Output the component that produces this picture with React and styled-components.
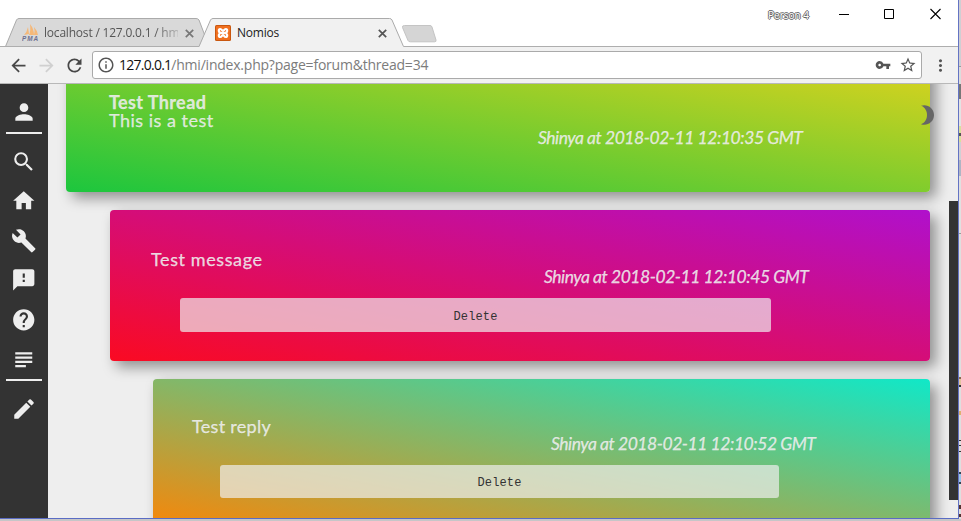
import React from "react";
import styled, { createGlobalStyle } from "styled-components";
import {
  MdPerson, MdSearch, MdHome, MdBuild, MdFeedback, MdHelp, MdSubject, MdEdit,
  MdArrowBack, MdArrowForward, MdRefresh, MdVpnKey, MdStarBorder, MdMoreVert,
  MdInfoOutline,
} from "react-icons/md";

const GlobalStyle = createGlobalStyle`
  * { box-sizing: border-box; }
  body { margin: 0; background: #d2d2d2; overflow: hidden; }
  svg { display: block; flex: none; }
`;

const Desktop = styled.div`
  display: flex;
  width: 961px;
  height: 521px;
  overflow: hidden;
  background: #c6c6c8;
`;

const Window = styled.div`
  display: flex;
  flex-direction: column;
  width: 959px;
  height: 519px;
  border-right: 1px solid #6474c4;
  border-bottom: 1px solid #5a6cc4;
  background: #fff;
  font-family: "Open Sans", sans-serif;
`;

const Edge = styled.div`
  display: flex;
  flex-direction: column;
  width: 2px;
  height: 519px;
`;

const EdgePiece = styled.div`
  height: ${(p) => p.$h}px;
  flex: none;
  background: ${(p) => p.$c};
`;

const TitleBar = styled.header`
  position: relative;
  height: 47px;
  flex: none;
  background: #fff;
`;

const TabShapes = styled.svg`
  position: absolute;
  left: 0;
  top: 0;
`;

const TabRow = styled.div`
  position: absolute;
  left: 22px;
  top: 22px;
  display: flex;
  height: 22px;
  align-items: center;
`;

const Tab = styled.div`
  display: flex;
  align-items: center;
  width: ${(p) => p.$w}px;
`;

const TabTitle = styled.span`
  width: ${(p) => p.$w}px;
  margin-left: ${(p) => p.$gap}px;
  overflow: hidden;
  white-space: nowrap;
  font-size: 12px;
  line-height: 20px;
  letter-spacing: ${(p) => p.$ls}px;
  color: ${(p) => p.$c};
  ${(p) => p.$fade && "-webkit-mask-image: linear-gradient(to right, #000 82%, rgba(0,0,0,.25)); mask-image: linear-gradient(to right, #000 82%, rgba(0,0,0,.25));"}
`;

const Controls = styled.div`
  position: absolute;
  right: 17px;
  top: 6px;
  display: flex;
  align-items: center;
  height: 16px;
`;

const Profile = styled.span`
  position: relative;
  top: 1px;
  margin-right: 30px;
  font-size: 10px;
  line-height: 16px;
  letter-spacing: 0;
  color: #fff;
  text-shadow: 1px 0 #666, -1px 0 #666, 0 1px #666, 0 -1px #666;
`;

const ControlIcon = styled.svg`
  margin-left: ${(p) => p.$gap || 0}px;
`;

const Toolbar = styled.div`
  display: flex;
  align-items: center;
  height: 37px;
  flex: none;
  padding: 0 8px;
  background: #f1f1f1;
  border-bottom: 1px solid #b8b8b8;
  color: #555;
`;

const ToolButton = styled.span`
  display: flex;
  justify-content: center;
  width: 28px;
  padding-right: 8px;
  color: ${(p) => (p.$off ? "#d0d0d0" : "#484848")};
`;

const AddressBar = styled.div`
  display: flex;
  align-items: center;
  width: 830px;
  height: 28px;
  padding: 0 4px;
  background: #fff;
  border: 1px solid #aaa;
  border-radius: 3px;
`;

const Url = styled.span`
  flex: 1;
  margin-left: 4px;
  font-size: 14px;
  line-height: 22px;
  letter-spacing: ${(p) => p.$ls}px;
  color: #7c7c7c;
`;

const Host = styled.span`
  color: #111;
  letter-spacing: ${(p) => p.$ls}px;
`;

const Body = styled.div`
  position: relative;
  display: flex;
  flex: 1;
  min-height: 0;
  background: #eee;
`;

const Sidebar = styled.nav`
  display: flex;
  flex-direction: column;
  align-items: center;
  width: 48px;
  padding-top: 8px;
  background: #333;
  color: #eee;
`;

const NavItem = styled.span`
  display: flex;
  align-items: center;
  justify-content: center;
  height: 39.6px;
`;

const Divider = styled.span`
  width: 36px;
  height: 2px;
  background: #eee;
  margin-bottom: ${(p) => p.$after}px;
`;

const ForumArea = styled.div`
  width: 910px;
  height: 434px;
  overflow: hidden;
`;

const Thread = styled.main`
  display: flex;
  flex-direction: column;
  align-items: flex-end;
  gap: 18px;
  width: 882px;
`;

const Card = styled.article`
  flex: none;
  width: ${(p) => p.$w}px;
  height: ${(p) => p.$h}px;
  margin-top: ${(p) => p.$mt || 0}px;
  padding: ${(p) => p.$pt || 40}px 0 0 ${(p) => p.$pad}px;
  border-radius: 4px;
  background: linear-gradient(to top right, ${(p) => p.$from}, ${(p) => p.$to});
  box-shadow: 6px 6px 14px rgba(0, 0, 0, 0.4);
  color: rgba(238, 238, 238, 0.9);
  font-family: "Lato", sans-serif;
  font-size: 18px;
  line-height: 18px;
  white-space: nowrap;
  -webkit-text-stroke: 0.25px currentColor;
`;

const Line = styled.div`
  height: 18px;
  letter-spacing: ${(p) => p.$ls}px;
  font-weight: ${(p) => (p.$bold ? 700 : 400)};
`;

const Meta = styled.div`
  height: 18px;
  margin-left: ${(p) => p.$ml}px;
  font-size: 17.5px;
  font-style: italic;
  letter-spacing: ${(p) => p.$ls}px;
`;

const DeleteButton = styled.button`
  display: block;
  width: ${(p) => p.$w}px;
  height: ${(p) => p.$h}px;
  margin: 12px 0 0 ${(p) => p.$ml}px;
  padding: 3px 0 0;
  border: 0;
  border-radius: 3px;
  background: rgba(238, 238, 238, 0.7);
  color: #333;
  font-family: "Liberation Mono", monospace;
  font-size: 12px;
  letter-spacing: 0.13px;
  -webkit-text-stroke: 0;
`;

const Scrollbar = styled.div`
  position: absolute;
  right: 0;
  top: 117px;
  width: 9px;
  height: 299px;
  background: #333;
`;

const Moon = styled.svg`
  position: absolute;
  left: 921px;
  top: 21px;
`;

const PmaLogo = () => (
  <svg width="18" height="18" viewBox="0 0 18 18">
    <path d="M2 11Q5 8 6 3L7 10Z M7 11Q9 7 8 0Q12 5 12 11Z M12 11Q13 6 12 3Q15 6 16 11Z" fill="#f5b878" />
    <text x="0" y="17" fontFamily="Liberation Sans" fontSize="6.4" fontWeight="700" fontStyle="italic" fill="#6d6f8e" textLength="16">PMA</text>
  </svg>
);

const XamppLogo = () => (
  <svg width="16" height="16" viewBox="0 0 16 16">
    <rect width="16" height="16" rx="1.5" fill="#c9570f" />
    <rect x="1" y="1" width="14" height="14" rx="1" fill="#f07020" />
    <path d="M6.2 8H9.8M6.2 8C3.5 8 3 4 5.2 4C7 4 6.8 6 8 6C9.2 6 9 4 10.8 4C13 4 12.5 8 9.8 8M6.2 8C3.5 8 3 12 5.2 12C7 12 6.8 10 8 10C9.2 10 9 12 10.8 12C13 12 12.5 8 9.8 8" fill="none" stroke="#fff" strokeWidth="2.2" />
  </svg>
);

const Cross = ({ color }) => (
  <svg width="9" height="9" viewBox="0 0 9 9">
    <path d="M.8 .8L8.2 8.2M8.2 .8L.8 8.2" stroke={color} strokeWidth="1.7" />
  </svg>
);

const NAV = [MdSearch, MdHome, MdBuild, MdFeedback, MdHelp, MdSubject];

const EDGE = [
  [66, "#cfcfd3"], [1, "#999"], [17, "#dcdcdc"], [15, "#777"], [27, "#e3e3e3"],
  [7, "#d9df9b"], [3, "#555"], [6, "#d9df9b"], [18, "#d0d0d4"], [16, "#aeb5c4"],
  [57, "#e0e0e0"], [1, "#999"], [143, "#dedede"], [2, "#8a6a50"], [6, "#e2c49c"],
  [2, "#333"], [24, "#dedede"], [4, "#dfb070"], [25, "#dedede"], [1, "#333"],
  [4, "#dedede"], [1, "#333"], [5, "#dedede"], [1, "#333"], [20, "#dedede"],
  [2, "#345"], [8, "#9cc4e8"], [2, "#345"], [21, "#dedede"], [4, "#533"],
  [5, "#dedede"], [3, "#533"], [2, "#dedede"],
];

export default function App() {
  return (
    <Desktop>
      <GlobalStyle />
      <Window>
        <TitleBar>
          <TabShapes width="958" height="47" viewBox="0 0 958 47">
            <path d="M5.5 46.5L16.5 20Q17.3 18.5 19 18.5H196Q198 18.5 199 20L209 46.5Z" fill="#d9d9d9" stroke="#aaa" />
            <rect y="46" width="958" height="1" fill="#aeaeae" />
            <path d="M199 47L210.5 20Q211.3 18.5 213 18.5H389.5Q391.3 18.5 392 20L403.5 46.5L404 47Z" fill="#f1f1f1" />
            <path d="M199 46.5L210.5 20Q211.3 18.5 213 18.5H389.5Q391.3 18.5 392 20L403.5 46.5" fill="none" stroke="#aaa" />
            <path d="M404.5 25.5H430Q431.5 25.5 432 27L436 40Q436.5 41.8 434.5 41.8H410.5Q408.5 41.8 408 40.5L402.5 27.5Q402 25.5 404.5 25.5Z" fill="#d5d5d5" stroke="#c4c4c4" />
          </TabShapes>
          <TabRow>
            <Tab $w={193}>
              <PmaLogo />
              <TabTitle $w={134} $gap={4} $ls={-0.2} $c="#555" $fade>localhost / 127.0.0.1 / hm</TabTitle>
              <ControlIcon as="span" $gap={7}><Cross color="#777" /></ControlIcon>
            </Tab>
            <Tab $w={175}>
              <XamppLogo />
              <TabTitle $w={134} $gap={6} $ls={-0.2} $c="#222">Nomios</TabTitle>
              <ControlIcon as="span" $gap={7}><Cross color="#555" /></ControlIcon>
            </Tab>
          </TabRow>
          <Controls>
            <Profile>Person 4</Profile>
            <ControlIcon width="10" height="12" viewBox="0 0 10 12"><path d="M0 6.5H10" stroke="#000" /></ControlIcon>
            <ControlIcon $gap={35} width="11" height="12" viewBox="0 0 11 12"><path d="M.5 1.5H9.5V10.5H.5Z" fill="none" stroke="#000" /></ControlIcon>
            <ControlIcon $gap={35} width="11" height="12" viewBox="0 0 11 12"><path d="M.5 1L10.5 11M10.5 1L.5 11" stroke="#000" strokeWidth="1.1" /></ControlIcon>
          </Controls>
        </TitleBar>
        <Toolbar>
          <ToolButton><MdArrowBack size={21} /></ToolButton>
          <ToolButton $off><MdArrowForward size={21} /></ToolButton>
          <ToolButton><MdRefresh size={21} /></ToolButton>
          <AddressBar>
            <MdInfoOutline size={18} />
            <Url $ls={-0.22}><Host $ls={-0.75}>127.0.0.1</Host>/hmi/index.php?page=forum&amp;thread=34</Url>
            <MdVpnKey size={16} />
            <ControlIcon as="span" $gap={8}><MdStarBorder size={18} /></ControlIcon>
          </AddressBar>
          <ControlIcon as="span" $gap={9}><MdMoreVert size={19} /></ControlIcon>
        </Toolbar>
        <Body>
          <Sidebar>
            <NavItem><MdPerson size={26} /></NavItem>
            <Divider $after={8} />
            {NAV.map((Icon, i) => <NavItem key={i}><Icon size={25.5} /></NavItem>)}
            <Divider $after={8} />
            <NavItem><MdEdit size={26} /></NavItem>
          </Sidebar>
          <ForumArea>
            <Thread>
              <Card $w={864} $h={139} $mt={-31} $pad={43} $from="#1cc63e" $to="#e4d31c">
                <Line $bold $ls={0.4}>Test Thread</Line>
                <Line $ls={0.5}>This is a test</Line>
                <Meta $ml={429} $ls={-0.45}>Shinya at 2018-02-11 12:10:35 GMT</Meta>
              </Card>
              <Card $w={820} $h={151} $pad={41} $from="#fa0a22" $to="#b010cc">
                <Line $ls={0.6}>Test message</Line>
                <Meta $ml={393} $ls={-0.45}>Shinya at 2018-02-11 12:10:45 GMT</Meta>
                <DeleteButton $w={591} $h={34} $ml={29}>Delete</DeleteButton>
              </Card>
              <Card $w={777} $h={149} $pt={38} $pad={39} $from="#f88608" $to="#10e8c8">
                <Line $ls={0.3}>Test reply</Line>
                <Meta $ml={359} $ls={-0.45}>Shinya at 2018-02-11 12:10:52 GMT</Meta>
                <DeleteButton $w={559} $h={33} $ml={28}>Delete</DeleteButton>
              </Card>
            </Thread>
          </ForumArea>
          <Moon width="14" height="20" viewBox="0 0 14 20"><path d="M0 .8C6-1.5 13 3 13 10S6 21.5 0 19.2C8 16.5 8 3.5 0 .8Z" fill="#666" /></Moon>
          <Scrollbar />
        </Body>
      </Window>
      <Edge>
        {EDGE.map(([h, c], i) => <EdgePiece key={i} $h={h} $c={c} />)}
      </Edge>
    </Desktop>
  );
}
